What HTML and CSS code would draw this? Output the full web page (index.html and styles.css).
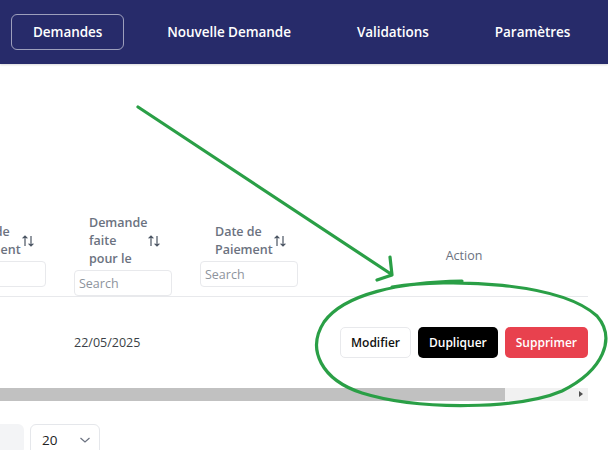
FILE: index.html
```html
<!DOCTYPE html>
<html lang="fr">
<head>
  <meta charset="UTF-8" />
  <meta name="viewport" content="width=device-width, initial-scale=1.0"/>
  <title>Demandes</title>
  <link rel="stylesheet" href="styles.css">
</head>
<body>
  <nav class="topbar">
    <a class="nav-link active" href="#">Demandes</a>
    <a class="nav-link" href="#">Nouvelle Demande</a>
    <a class="nav-link" href="#">Validations</a>
    <a class="nav-link" href="#">Paramètres</a>
  </nav>

  <main class="content">
    <div class="table-wrap">
      <table class="grid">
        <thead>
          <tr>
            <th class="col">
              <div class="th-title">
                <span class="th-label">Date de Paiement</span>
                <svg class="sort" viewBox="0 0 14 14"><path d="M4 12V2M1.6 4.4L4 2l2.4 2.4M10 2v10M7.6 9.6L10 12l2.4-2.4"/></svg>
              </div>
              <input class="search" placeholder="Search">
            </th>
            <th class="col">
              <div class="th-title">
                <span class="th-label">Demande faite pour le</span>
                <svg class="sort" viewBox="0 0 14 14"><path d="M4 12V2M1.6 4.4L4 2l2.4 2.4M10 2v10M7.6 9.6L10 12l2.4-2.4"/></svg>
              </div>
              <input class="search" placeholder="Search">
            </th>
            <th class="col">
              <div class="th-title">
                <span class="th-label">Date de Paiement</span>
                <svg class="sort" viewBox="0 0 14 14"><path d="M4 12V2M1.6 4.4L4 2l2.4 2.4M10 2v10M7.6 9.6L10 12l2.4-2.4"/></svg>
              </div>
              <input class="search" placeholder="Search">
            </th>
            <th class="col-action">Action</th>
          </tr>
        </thead>
        <tbody>
          <tr>
            <td></td>
            <td>22/05/2025</td>
            <td></td>
            <td class="col-action">
              <div class="actions">
                <button class="btn btn-light">Modifier</button>
                <button class="btn btn-dark">Dupliquer</button>
                <button class="btn btn-danger">Supprimer</button>
              </div>
            </td>
          </tr>
        </tbody>
      </table>
    </div>

    <div class="hscroll">
      <div class="thumb"></div>
      <span class="arrow"></span>
    </div>

    <div class="pager">
      <span class="page-btn"></span>
      <div class="page-size">
        <span>20</span>
        <svg class="chevron" viewBox="0 0 12 8"><path d="M1.5 2l4.5 4 4.5-4"/></svg>
      </div>
    </div>
  </main>

  <!-- green hand-drawn annotation -->
  <svg class="annotation" viewBox="0 0 608 450">
    <path d="M138 107L391 274M390 257l2 18-15 5"/>
    <path d="M392 287C450 278 560 282 597 316C616 338 604 370 562 391C520 409 420 411 362 393C322 380 306 350 324 322C344 294 400 282 462 281"/>
  </svg>
</body>
</html>
```

FILE: styles.css
```css
* {
  margin: 0;
  padding: 0;
  box-sizing: border-box;
}

html, body {
  width: 100%;
  height: 100%;
  overflow: hidden;
  font-family: "Open Sans", "Noto Sans", sans-serif;
  background-color: white;
}

.topbar {
  height: 64px;
  background: #272b6a;
  display: flex;
  align-items: center;
  gap: 20px;
  padding-left: 11px;
  box-shadow: 0 1px 2px rgba(0,0,0,0.15);
}

.nav-link {
  display: flex;
  align-items: center;
  height: 36px;
  padding: 0 22px;
  border: 1px solid transparent;
  border-radius: 6px;
  color: white;
  text-decoration: none;
  font-size: 13.5px;
  font-weight: 600;
  letter-spacing: -0.05px;
  white-space: nowrap;
}

.nav-link.active {
  padding: 0 21px;
  border-color: rgba(255,255,255,0.55);
}

.content {
  padding-top: 150px;
  padding-right: 20px;
}

.table-wrap {
  width: 588px;
  overflow: hidden;
}

.grid {
  margin-left: -66px;
  width: 654px;
  table-layout: fixed;
  border-collapse: collapse;
  font-size: 12.5px;
}

.grid th.col,
.grid td {
  width: 126px;
  padding: 0 14px;
  vertical-align: middle;
}

.grid thead tr {
  border-bottom: 1px solid #e8e9ec;
}

.grid th {
  font-weight: 600;
  color: #6b7280;
  text-align: left;
}

.th-title {
  display: flex;
  justify-content: center;
  align-items: center;
  margin-bottom: 2px;
  padding-left: 4px;
}

.th-label {
  max-width: 57px;
  line-height: 18px;
}

.sort {
  width: 14px;
  height: 14px;
  margin-left: 1px;
  fill: none;
  stroke: #4b5563;
  stroke-width: 1.2;
}

.search {
  display: block;
  width: 100%;
  height: 26px;
  border: 1px solid #e8e9ec;
  border-radius: 4px;
  padding: 0 4px;
  font-family: inherit;
  font-size: 12.5px;
}

.search::placeholder {
  color: #8d939c;
}

.grid th.col-action,
.grid td.col-action {
  width: 276px;
  padding: 0 0 0 28px;
  text-align: center;
  font-weight: 500;
}

.grid td {
  height: 91px;
  color: #3b3f46;
}

.actions {
  display: flex;
  justify-content: center;
  gap: 7px;
}

.btn {
  height: 31px;
  padding: 0 10px;
  border-radius: 5px;
  border: 1px solid transparent;
  font-family: inherit;
  font-size: 12px;
  font-weight: 600;
}

.btn-light {
  background: white;
  border-color: #e8e9ec;
  color: #111;
}

.btn-dark {
  background: #000;
  color: white;
}

.btn-danger {
  background: #e8414e;
  color: white;
}

.hscroll {
  position: relative;
  width: 588px;
  height: 13px;
  background: #f1f1f1;
}

.thumb {
  width: 505px;
  height: 100%;
  background: #c1c1c1;
}

.arrow {
  position: absolute;
  right: 5px;
  top: 3px;
  border-left: 4px solid #505050;
  border-top: 3.5px solid transparent;
  border-bottom: 3.5px solid transparent;
}

.pager {
  display: flex;
  gap: 6px;
  margin-top: 23px;
  margin-left: -14px;
}

.page-btn {
  width: 38px;
  height: 30px;
  background: #f3f4f6;
  border-radius: 6px;
}

.page-size {
  display: flex;
  align-items: center;
  gap: 22px;
  width: 70px;
  height: 32px;
  padding-left: 11px;
  border: 1px solid #e5e7eb;
  border-radius: 6px;
  font-size: 13.5px;
  color: #222;
}

.chevron {
  width: 12px;
  height: 8px;
  fill: none;
  stroke: #6b7280;
  stroke-width: 1.2;
}

.annotation {
  position: absolute;
  top: 0;
  left: 0;
  width: 608px;
  height: 450px;
  pointer-events: none;
  fill: none;
  stroke: #2a9f46;
  stroke-width: 3.2;
  stroke-linecap: round;
  stroke-linejoin: round;
}
```
